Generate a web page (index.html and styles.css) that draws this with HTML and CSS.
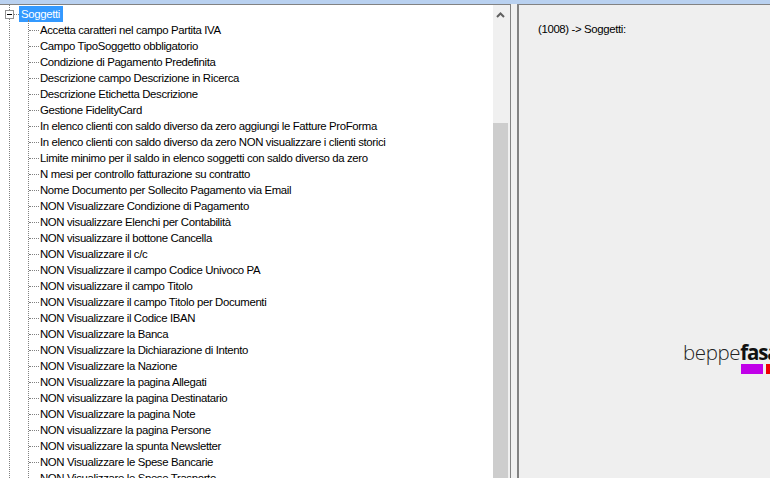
FILE: index.html
```html
<!DOCTYPE html>
<html lang="it">
<head>
<meta charset="utf-8">
<title>Soggetti</title>
<link rel="stylesheet" href="styles.css">
</head>
<body>
<div class="topbar"></div>
<div class="main">
  <div class="treepane">
    <div class="tree">
      <div class="root">
        <svg class="expander" width="9" height="9" viewBox="0 0 9 9"><rect x="0.5" y="0.5" width="8" height="8" fill="#fff" stroke="#919191"/><path d="M2 4.5h5" stroke="#000"/></svg>
        <span class="dotsh short"></span>
        <span class="rootlabel">Soggetti</span>
      </div>
      <ul class="items">
        <li><span class="dotsh"></span><span>Accetta caratteri nel campo Partita IVA</span></li>
        <li><span class="dotsh"></span><span>Campo TipoSoggetto obbligatorio</span></li>
        <li><span class="dotsh"></span><span>Condizione di Pagamento Predefinita</span></li>
        <li><span class="dotsh"></span><span>Descrizione campo Descrizione in Ricerca</span></li>
        <li><span class="dotsh"></span><span>Descrizione Etichetta Descrizione</span></li>
        <li><span class="dotsh"></span><span>Gestione FidelityCard</span></li>
        <li><span class="dotsh"></span><span>In elenco clienti con saldo diverso da zero aggiungi le Fatture ProForma</span></li>
        <li><span class="dotsh"></span><span>In elenco clienti con saldo diverso da zero NON visualizzare i clienti storici</span></li>
        <li><span class="dotsh"></span><span>Limite minimo per il saldo in elenco soggetti con saldo diverso da zero</span></li>
        <li><span class="dotsh"></span><span>N mesi per controllo fatturazione su contratto</span></li>
        <li><span class="dotsh"></span><span>Nome Documento per Sollecito Pagamento via Email</span></li>
        <li><span class="dotsh"></span><span>NON Visualizzare Condizione di Pagamento</span></li>
        <li><span class="dotsh"></span><span>NON visualizzare Elenchi per Contabilità</span></li>
        <li><span class="dotsh"></span><span>NON visualizzare il bottone Cancella</span></li>
        <li><span class="dotsh"></span><span>NON Visualizzare il c/c</span></li>
        <li><span class="dotsh"></span><span>NON Visualizzare il campo Codice Univoco PA</span></li>
        <li><span class="dotsh"></span><span>NON visualizzare il campo Titolo</span></li>
        <li><span class="dotsh"></span><span>NON Visualizzare il campo Titolo per Documenti</span></li>
        <li><span class="dotsh"></span><span>NON Visualizzare il Codice IBAN</span></li>
        <li><span class="dotsh"></span><span>NON Visualizzare la Banca</span></li>
        <li><span class="dotsh"></span><span>NON Visualizzare la Dichiarazione di Intento</span></li>
        <li><span class="dotsh"></span><span>NON Visualizzare la Nazione</span></li>
        <li><span class="dotsh"></span><span>NON Visualizzare la pagina Allegati</span></li>
        <li><span class="dotsh"></span><span>NON visualizzare la pagina Destinatario</span></li>
        <li><span class="dotsh"></span><span>NON Visualizzare la pagina Note</span></li>
        <li><span class="dotsh"></span><span>NON visualizzare la pagina Persone</span></li>
        <li><span class="dotsh"></span><span>NON visualizzare la spunta Newsletter</span></li>
        <li><span class="dotsh"></span><span>NON Visualizzare le Spese Bancarie</span></li>
        <li><span class="dotsh"></span><span>NON Visualizzare le Spese Trasporto</span></li>
      </ul>
    </div>
    <div class="scrollbar">
      <svg class="arrow" width="9" height="6" viewBox="0 0 9 6"><path d="M1 5l3.5-3.5L8 5" fill="none" stroke="#606060" stroke-width="2"/></svg>
      <div class="thumb"></div>
    </div>
  </div>
  <div class="splitter"></div>
  <div class="detail">
    <p class="path">(1008) -&gt; Soggetti:</p>
    <div class="logo">
      <div class="logotext">beppe<b>fasa</b></div>
      <div class="logobars"><span class="barp"></span><span class="barr"></span></div>
    </div>
  </div>
</div>
</body>
</html>
```
FILE: styles.css
```css
* { box-sizing: border-box; }
html, body { margin: 0; height: 100%; overflow: hidden; }
body {
  display: flex;
  flex-direction: column;
  height: 478px;
  font-family: "Liberation Sans", Arial, sans-serif;
  font-size: 11.4px;
  letter-spacing: -0.36px;
  color: #000;
  background: #f0f0f0;
}
.topbar { height: 4px; background: #b9d1f0; flex: none; }
.main { flex: 1; display: flex; min-height: 0; }
.treepane {
  width: 511px;
  display: flex;
  background: #fff;
  border-top: 1px solid #828282;
  border-right: 1px solid #828282;
  overflow: hidden;
  flex: none;
}
.tree { flex: 1; min-width: 0; padding: 1px 0 0 5px; overflow: hidden; position: relative; }
.tree::before {
  content: "";
  position: absolute;
  left: 9px;
  top: 0;
  bottom: 0;
  border-left: 1px dotted #808080;
}
.root { height: 16px; display: flex; align-items: center; position: relative; }
.expander { flex: none; position: relative; }
.dotsh { display: block; width: 13px; border-top: 1px dotted #808080; flex: none; }
.dotsh.short { width: 5px; }
.rootlabel { background: #3399ff; color: #fff; padding: 0 3px 0 2px; height: 16px; line-height: 16px; }
.items { list-style: none; margin: 0; padding: 0 0 0 24px; position: relative; }
.items::before {
  content: "";
  position: absolute;
  left: 23px;
  top: -2px;
  bottom: 0;
  border-left: 1px dotted #808080;
}
.items li { height: 16px; line-height: 16px; display: flex; align-items: center; white-space: nowrap; }
.items .dotsh { width: 10px; margin-right: 1px; }
.scrollbar { width: 17px; flex: none; background: #f0f0f0; display: flex; flex-direction: column; align-items: flex-start; }
.arrow { margin: 7px 0 0 3px; }
.thumb { width: 15px; flex: 1; margin-top: 105px; background: #cdcdcd; }
.splitter { width: 6px; flex: none; background: #f0f0f0; }
.detail {
  flex: 1;
  min-width: 0;
  border-top: 1px solid #828282;
  border-left: 2px solid #828282;
  background: #efefef;
  padding: 16px 0 0 19px;
  position: relative;
  overflow: hidden;
}
.path { margin: 0; line-height: 16px; }
.logo { position: absolute; left: 164px; top: 335px; white-space: nowrap; }
.logotext { font-family: "Open Sans", sans-serif; font-weight: 300; font-size: 20.5px; line-height: 24px; color: #222; letter-spacing: -0.4px; }
.logotext b { font-weight: 700; color: #111; letter-spacing: -1.1px; }
.logobars { display: flex; gap: 3px; margin-left: 58px; height: 10px; }
.barp { width: 22px; background: #c000e8; }
.barr { width: 22px; background: #f00000; }
```
